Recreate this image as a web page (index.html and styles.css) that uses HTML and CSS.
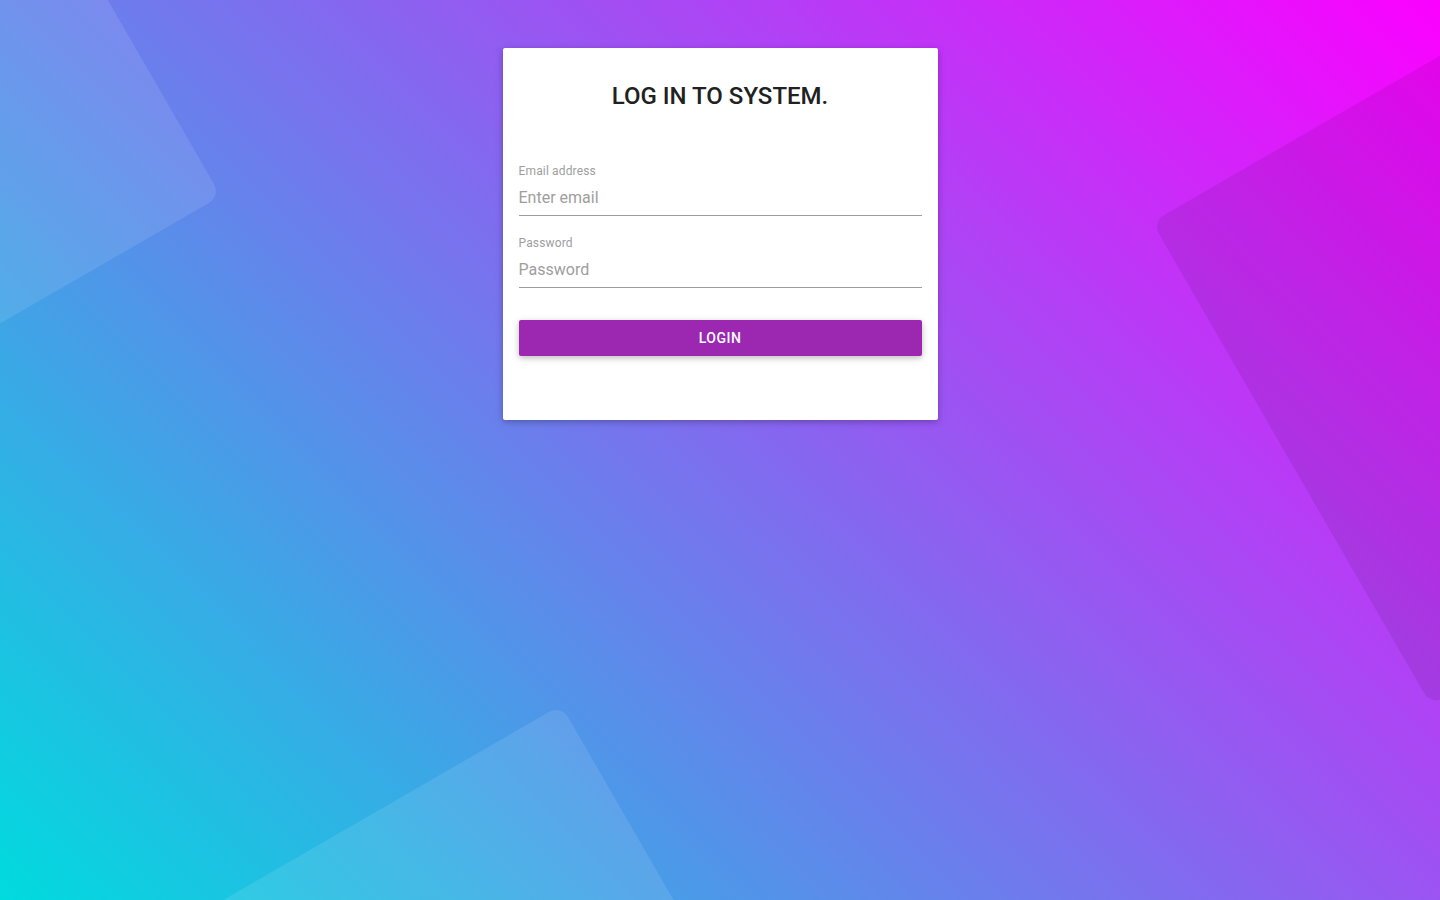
FILE: index.html
```html
<!DOCTYPE html>
<html lang="en">
<head>
<meta charset="utf-8">
<title>Log in</title>
<link rel="stylesheet" href="styles.css">
</head>
<body>
<svg class="bg-shapes" width="1440" height="900" viewBox="0 0 1440 900" aria-hidden="true">
  <g transform="translate(221,196) rotate(60)">
    <rect x="-700" y="0" width="700" height="700" rx="14" fill="#ffffff" fill-opacity="0.1"/>
  </g>
  <g transform="translate(561,705) rotate(60)">
    <rect x="0" y="0" width="700" height="700" rx="14" fill="#ffffff" fill-opacity="0.1"/>
  </g>
  <g transform="translate(1152,222) rotate(60)">
    <rect x="0" y="-800" width="558" height="800" rx="14" fill="#000000" fill-opacity="0.08"/>
  </g>
</svg>
<main class="card">
  <h1 class="card-title">LOG IN TO SYSTEM.</h1>
  <form class="form">
    <div class="field">
      <label class="field-label" for="email">Email address</label>
      <input class="field-input" id="email" type="email" placeholder="Enter email">
    </div>
    <div class="field field-second">
      <label class="field-label" for="password">Password</label>
      <input class="field-input" id="password" type="password" placeholder="Password">
    </div>
    <button class="btn-login" type="button">LOGIN</button>
  </form>
</main>
</body>
</html>
```

FILE: styles.css
```css
* { box-sizing: border-box; }

html, body {
  margin: 0;
  padding: 0;
  height: 100%;
}

body {
  font-family: Roboto, "Liberation Sans", Arial, sans-serif;
  background: linear-gradient(45deg, #00dbde 0%, #fc00ff 100%);
  overflow: hidden;
  position: relative;
  padding-top: 48px;
}

.bg-shapes {
  position: absolute;
  left: 0;
  top: 0;
  z-index: 0;
}

.card {
  position: relative;
  z-index: 1;
  width: 435px;
  margin: 0 auto;
  background: #ffffff;
  border-radius: 2px;
  padding: 16px 16px 64px;
  box-shadow: 0 2px 5px 0 rgba(0,0,0,0.16), 0 2px 10px 0 rgba(0,0,0,0.12);
}

.card-title {
  margin: 16px 0 0;
  font-size: 24px;
  line-height: 32px;
  font-weight: 500;
  color: #212121;
  text-align: center;
}

.form {
  display: flex;
  flex-direction: column;
  margin-top: 51px;
}

.field {
  display: flex;
  flex-direction: column;
}

.field-second {
  margin-top: 19px;
}

.field-label {
  font-size: 12px;
  line-height: 16px;
  letter-spacing: 0.15px;
  color: #9e9e9e;
}

.field-input {
  height: 37px;
  border: 0;
  border-bottom: 1px solid #9e9e9e;
  padding: 0;
  margin: 0;
  font-family: inherit;
  font-size: 16px;
  color: #212121;
  background: transparent;
  outline: none;
}

.field-input::placeholder {
  color: #9e9e9e;
  opacity: 1;
}

.btn-login {
  margin-top: 32px;
  height: 36px;
  border: 0;
  border-radius: 2px;
  background: #9c27b0;
  color: #ffffff;
  font-family: inherit;
  font-size: 14px;
  font-weight: 500;
  letter-spacing: 0.5px;
  box-shadow: 0 2px 5px 0 rgba(0,0,0,0.16), 0 2px 10px 0 rgba(0,0,0,0.12);
  cursor: pointer;
}
```
